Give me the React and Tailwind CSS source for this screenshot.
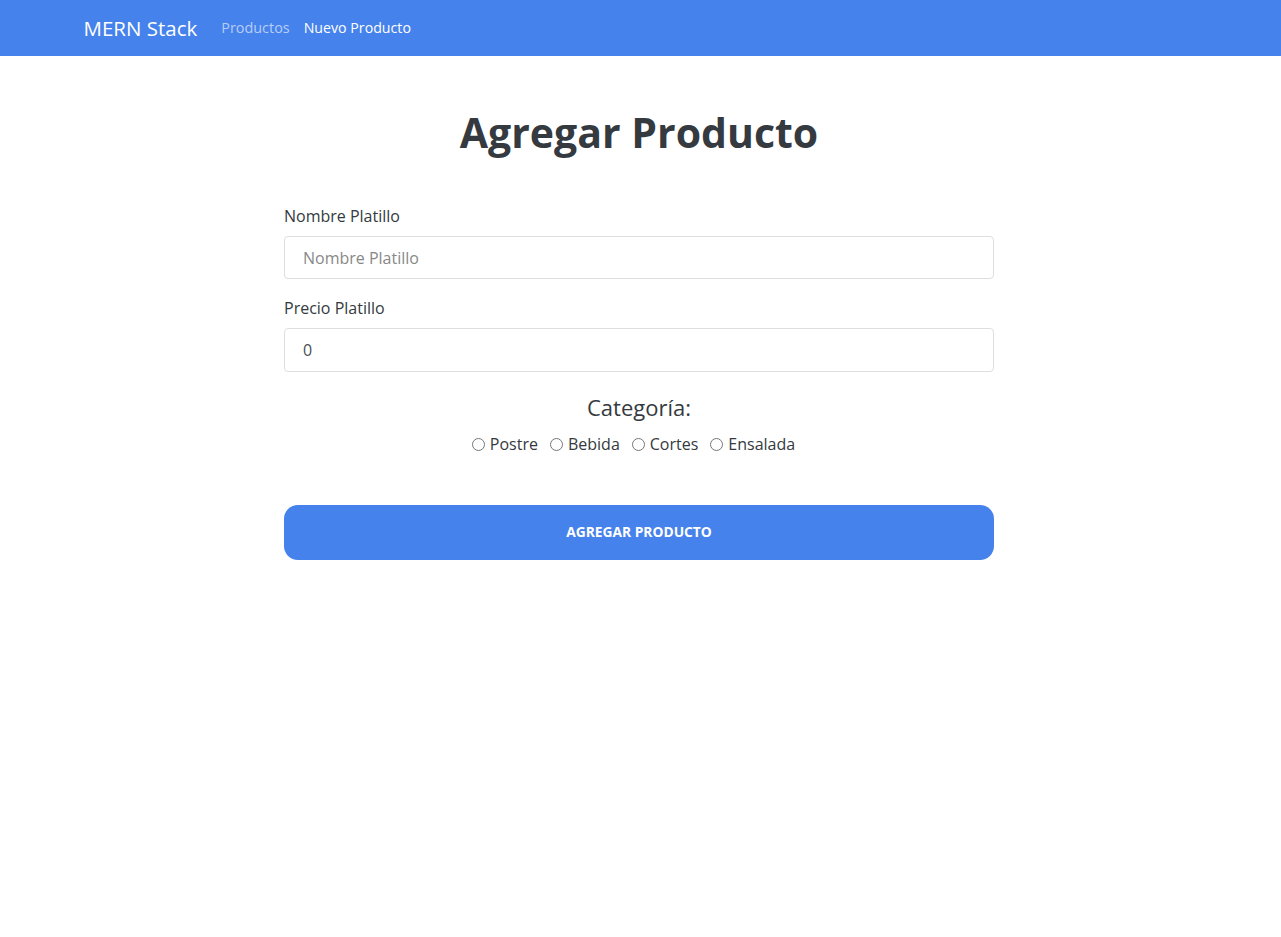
import React from "react";

export default function App() {
  const cats = ["Postre", "Bebida", "Cortes", "Ensalada"];
  return (
    <div className="min-h-[937px] bg-white text-[#343a40]" style={{ fontFamily: '"Open Sans", "Noto Sans", sans-serif' }}>
      <nav className="h-[56px] bg-[#4582ec]">
        <div className="mx-auto flex h-full w-[1140px] items-center px-[15px]">
          <span className="mr-[24px] -ml-[2px] text-[20.5px] text-white">MERN Stack</span>
          <span className="mr-[14px] text-[14.4px] text-[#b7cdf6]">Productos</span>
          <span className="text-[14.2px] text-white">Nuevo Producto</span>
        </div>
      </nav>
      <div className="flex justify-center pr-[3px]">
        <main className="w-[710px] pt-[52px]">
          <h1 className="text-center text-[41px] font-bold leading-[1.2] text-[#343a40]">Agregar Producto</h1>
          <form className="mt-[47px]">
            <label className="block text-[16px] leading-[24px]">Nombre Platillo</label>
            <input
              className="mt-[8px] block h-[43px] w-full rounded-[4px] border border-[#dedede] px-[18px] text-[16px] placeholder:text-[#888] outline-none"
              placeholder="Nombre Platillo"
            />
            <label className="mt-[17px] block text-[16px] leading-[24px]">Precio Platillo</label>
            <input
              className="mt-[8px] block h-[44px] w-full rounded-[4px] border border-[#dedede] px-[18px] text-[16px] text-[#495057] outline-none"
              defaultValue="0"
            />
            <div className="mt-[19px] text-center text-[22px] leading-[32px]">Categoría:</div>
            <div className="mt-[9px] flex items-center justify-center gap-[12px] pr-[11px] text-[16px] leading-[24px]">
              {cats.map((c) => (
                <label key={c} className="flex items-center gap-[5px]">
                  <span className="inline-block h-[13px] w-[13px] rounded-full border-[1.5px] border-[#767676] bg-white" />
                  <span>{c}</span>
                </label>
              ))}
            </div>
            <button
              type="button"
              className="mt-[49px] block h-[55px] w-full rounded-[14px] bg-[#4582ec] text-[13.8px] font-bold text-white uppercase"
            >
              Agregar Producto
            </button>
          </form>
        </main>
      </div>
    </div>
  );
}
